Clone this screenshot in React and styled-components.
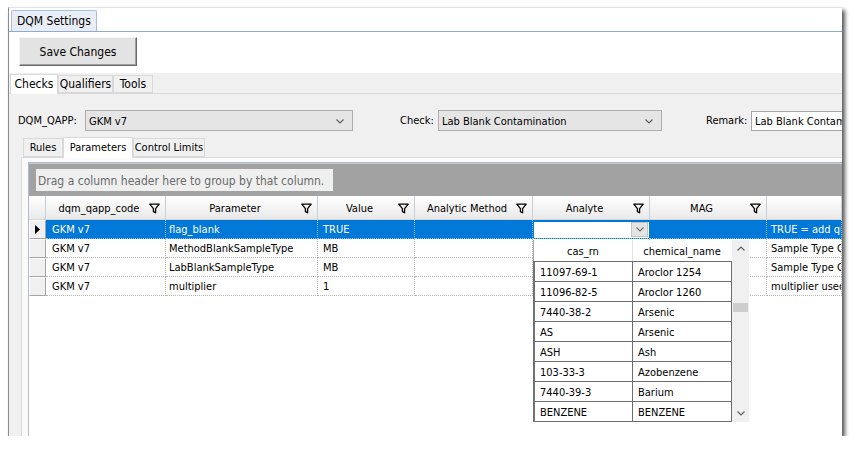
import React from 'react';
import styled, { createGlobalStyle } from 'styled-components';

const FONT = `"DejaVu Sans Condensed", "DejaVu Sans", Tahoma, sans-serif`;

const Global = createGlobalStyle`
  html, body { margin: 0; padding: 0; background: #fff; }
  body { font-family: ${FONT}; font-size: 11px; color: #000; }
  * { box-sizing: border-box; }
`;

const Window = styled.div`
  margin: 7px 0 0 8px;
  width: 834px;
  height: 429px;
  background: #fff;
  border-left: 1px solid #8c8c8c;
  border-top: 1px solid #e3e3e3;
  box-shadow: 3px 3px 4px rgba(0, 0, 0, 0.65);
  display: flex;
  flex-direction: column;
  overflow: hidden;
`;

const DocTabBar = styled.div`
  flex: none;
  display: flex;
  align-items: flex-end;
  height: 24px;
  padding-left: 2px;
  border-bottom: 1px solid #8ea9d3;
`;

const DocTab = styled.div`
  height: 21px;
  padding: 0 5px;
  display: flex;
  align-items: center;
  background: #e9eef6;
  border: 1px solid #a9bedf;
  border-bottom: none;
  border-radius: 2px 2px 0 0;
  font-size: 12px;
`;

const Toolbar = styled.div`
  flex: none;
  height: 41px;
  padding: 5px 0 0 10px;
`;

const Button = styled.button`
  width: 118px;
  height: 29px;
  font-family: ${FONT};
  font-size: 12px;
  color: #000;
  background: #e3e3e3;
  border: 1px solid;
  border-color: #f4f4f4 #6a6a6a #6a6a6a #f4f4f4;
  box-shadow: inset -1px -1px 0 #a0a0a0;
  padding: 0;
`;

const TabStrip = styled.div`
  flex: none;
  display: flex;
  align-items: flex-end;
  height: ${p => p.$h}px;
  padding-left: ${p => p.$pad}px;
  background: ${p => p.$bg};
`;

const Tab = styled.div`
  flex: none;
  width: ${p => p.$w}px;
  height: ${p => (p.$active ? p.$h + 2 : p.$h)}px;
  margin-bottom: ${p => (p.$active ? -1 : 0)}px;
  position: relative;
  z-index: ${p => (p.$active ? 1 : 0)};
  display: flex;
  align-items: center;
  justify-content: center;
  padding-bottom: ${p => (p.$active ? 2 : 0)}px;
  background: ${p => (p.$active ? '#ffffff' : '#f0f0f0')};
  border: 1px solid #d9d9d9;
  border-bottom: ${p => (p.$active ? 'none' : '1px solid #d9d9d9')};
  font-size: ${p => p.$fs}px;
  white-space: nowrap;
`;

const OuterPanel = styled.div`
  flex: 1;
  min-height: 0;
  display: flex;
  flex-direction: column;
  background: #f0f0f0;
  border-top: 1px solid #d9d9d9;
`;

const FilterRow = styled.div`
  flex: none;
  display: flex;
  align-items: center;
  height: 21px;
  margin-top: 16px;
  padding-left: 9px;
`;

const FieldLabel = styled.span`
  flex: none;
  width: ${p => p.$w}px;
  margin-left: ${p => p.$ml || 0}px;
  font-size: 11px;
  white-space: nowrap;
`;

const Combo = styled.div`
  flex: none;
  width: ${p => p.$w}px;
  height: 21px;
  display: flex;
  align-items: center;
  padding: 1px 8px 0 3px;
  background: #e5e5e5;
  border: 1px solid #adadad;
`;

const ComboText = styled.span`
  flex: 1;
  white-space: nowrap;
`;

const TextBox = styled.div`
  flex: 1;
  min-width: 0;
  height: 20px;
  display: flex;
  align-items: center;
  padding: 1px 0 0 3px;
  background: #fff;
  border: 1px solid #a6a6a6;
  border-right: none;
  white-space: nowrap;
  overflow: hidden;
`;

const InnerArea = styled.div`
  flex: 1;
  min-height: 0;
  display: flex;
  flex-direction: column;
  margin: 4px 0 0 12px;
`;

const InnerPanel = styled.div`
  flex: 1;
  min-height: 0;
  display: flex;
  background: #fafafa;
  border-top: 1px solid #d9d9d9;
  border-left: 1px solid #d9d9d9;
  padding: 4px 0 0 6px;
`;

const Grid = styled.div`
  flex: 1;
  min-width: 0;
  position: relative;
  display: flex;
  flex-direction: column;
  background: #fff;
  border-top: 1px solid #aabdd4;
  border-left: 1px solid #aabdd4;
  overflow: hidden;
`;

const GroupPanel = styled.div`
  flex: none;
  height: 33px;
  padding: 5px 0 0 7px;
  background: #a2a2a2;
  border-top: 1px solid #c8c8c8;
`;

const GroupHint = styled.div`
  display: inline-flex;
  align-items: center;
  height: 22px;
  width: 297px;
  padding: 1px 0 0 2px;
  background: #efefef;
  color: #6a6a6a;
  font-size: 12px;
  white-space: nowrap;
`;

const Row = styled.div`
  flex: none;
  display: flex;
  width: 100%;
  overflow: hidden;
  height: ${p => p.$h}px;
  background: ${p => (p.$selected ? '#0078d7' : '#fff')};
  color: ${p => (p.$selected ? '#fff' : '#000')};
`;

const HeadCell = styled.div`
  flex: ${p => (p.$fill ? '1 0 auto' : 'none')};
  width: ${p => p.$w}px;
  display: flex;
  align-items: center;
  padding: 1px 5px 0 3px;
  background: linear-gradient(#ffffff, #f3f3f3 55%, #e9e9e9);
  border-right: 1px solid #c6cfd8;
  border-bottom: 1px solid #d6d6d6;
  white-space: nowrap;
  overflow: hidden;
`;

const HeadLabel = styled.span`
  flex: 1;
  text-align: center;
  overflow: hidden;
`;

const Indicator = styled.div`
  flex: none;
  width: 17px;
  display: flex;
  align-items: center;
  justify-content: center;
  background: #f0f0f0;
  border-top: 1px solid #fdfdfd;
  border-left: 1px solid #fdfdfd;
  border-right: 1px solid #a5a5a5;
  border-bottom: 1px solid #a5a5a5;
`;

const Cell = styled.div`
  flex: ${p => (p.$fill ? '1 1 0' : 'none')};
  min-width: 0;
  width: ${p => p.$w}px;
  display: flex;
  align-items: center;
  padding: 1px 0 0 ${p => p.$pl}px;
  border-right: 1px dotted ${p => (p.$selected ? '#8fc0ea' : '#b4b4b4')};
  border-bottom: 1px dotted ${p => (p.$selected ? '#8fc0ea' : '#b4b4b4')};
  white-space: nowrap;
  overflow: hidden;
`;

const EditorCell = styled.div`
  flex: none;
  width: ${p => p.$w}px;
  padding: 2px 1px 0 1px;
  border-bottom: 1px dotted #8fc0ea;
  display: flex;
`;

const Editor = styled.div`
  flex: 1;
  display: flex;
  justify-content: flex-end;
  background: #fff;
  padding: 0 1px 1px 0;
`;

const DropButton = styled.div`
  width: 17px;
  display: flex;
  align-items: center;
  justify-content: center;
  background: #e3e3e3;
  border: 1px solid #c4c4c4;
`;

const Popup = styled.div`
  position: absolute;
  left: 504px;
  top: 77px;
  width: 216px;
  height: 182px;
  display: flex;
  background: #fff;
  z-index: 5;
`;

const PopupTable = styled.div`
  width: 199px;
  display: flex;
  flex-direction: column;
`;

const PopupHeadRow = styled.div`
  display: flex;
  height: 21px;
  border-left: 1px solid #a8a8a8;
`;

const PopupHead = styled.div`
  width: ${p => p.$w}px;
  display: flex;
  align-items: center;
  justify-content: center;
  padding-top: 1px;
  border-right: 1px solid ${p => p.$line};
`;

const PopupBody = styled.div`
  border-left: 2px solid #727272;
  border-top: 1px solid #6e6e6e;
`;

const PopupRow = styled.div`
  display: flex;
  height: 20px;
  border-bottom: 1px solid #6e6e6e;
`;

const PopupCell = styled.div`
  width: ${p => p.$w}px;
  display: flex;
  align-items: center;
  padding: 1px 0 0 5px;
  border-right: 1px solid #6e6e6e;
  white-space: nowrap;
`;

const Scrollbar = styled.div`
  width: 17px;
  display: flex;
  flex-direction: column;
  background: #f0f0f0;
`;

const ScrollArrow = styled.div`
  flex: none;
  height: 17px;
  display: flex;
  align-items: center;
  justify-content: center;
`;

const Track = styled.div`
  flex: 1;
  padding: 46px 1px 0 1px;
`;

const Thumb = styled.div`
  height: 9px;
  background: #cdcdcd;
`;

const Chevron = ({ up, color = '#606060', w = 8 }) => (
  <svg width={w} height={5} viewBox="0 0 8 5" style={{ display: 'block' }}>
    <polyline
      points={up ? '0.5,4.5 4,1 7.5,4.5' : '0.5,0.5 4,4 7.5,0.5'}
      fill="none"
      stroke={color}
      strokeWidth="1.2"
    />
  </svg>
);

const Funnel = () => (
  <svg width="11" height="11" viewBox="0 0 11 11" style={{ display: 'block', flex: 'none' }}>
    <path d="M0.8 1.2 H10.2 L6.6 5.6 V9.8 L4.4 8.6 V5.6 Z" fill="none" stroke="#000" strokeWidth="1.3" strokeLinejoin="round" />
  </svg>
);

const Pointer = () => (
  <svg width="5" height="9" viewBox="0 0 5 9" style={{ display: 'block' }}>
    <path d="M0 0 L5 4.5 L0 9 Z" fill="#000" />
  </svg>
);

const columns = [
  { key: 'code', title: 'dqm_qapp_code', w: 120, pl: 6 },
  { key: 'param', title: 'Parameter', w: 152, pl: 3 },
  { key: 'value', title: 'Value', w: 97, pl: 5 },
  { key: 'method', title: 'Analytic Method', w: 118, pl: 5 },
  { key: 'analyte', title: 'Analyte', w: 117, pl: 5 },
  { key: 'mag', title: 'MAG', w: 117, pl: 5 },
  { key: 'desc', title: '', w: 0, pl: 4, last: true },
];

const rows = [
  { code: 'GKM v7', param: 'flag_blank', value: 'TRUE', method: '', analyte: '', mag: '', desc: 'TRUE = add qualifier' },
  { code: 'GKM v7', param: 'MethodBlankSampleType', value: 'MB', method: '', analyte: '', mag: '', desc: 'Sample Type Code' },
  { code: 'GKM v7', param: 'LabBlankSampleType', value: 'MB', method: '', analyte: '', mag: '', desc: 'Sample Type Code' },
  { code: 'GKM v7', param: 'multiplier', value: '1', method: '', analyte: '', mag: '', desc: 'multiplier used' },
];

const chemicals = [
  ['11097-69-1', 'Aroclor 1254'],
  ['11096-82-5', 'Aroclor 1260'],
  ['7440-38-2', 'Arsenic'],
  ['AS', 'Arsenic'],
  ['ASH', 'Ash'],
  ['103-33-3', 'Azobenzene'],
  ['7440-39-3', 'Barium'],
  ['BENZENE', 'BENZENE'],
];

export default function App() {
  return (
    <>
      <Global />
      <Window>
        <DocTabBar>
          <DocTab>DQM Settings</DocTab>
        </DocTabBar>
        <Toolbar>
          <Button>Save Changes</Button>
        </Toolbar>
        <TabStrip $h={20} $pad={1} $bg="#f0f0f0">
          <Tab $w={48} $h={18} $fs={12} $active>Checks</Tab>
          <Tab $w={55} $h={18} $fs={12}>Qualifiers</Tab>
          <Tab $w={40} $h={18} $fs={12}>Tools</Tab>
        </TabStrip>
        <OuterPanel>
          <FilterRow>
            <FieldLabel $w={67}>DQM_QAPP:</FieldLabel>
            <Combo $w={268}>
              <ComboText>GKM v7</ComboText>
              <Chevron />
            </Combo>
            <FieldLabel $w={38} $ml={47}>Check:</FieldLabel>
            <Combo $w={224}>
              <ComboText>Lab Blank Contamination</ComboText>
              <Chevron />
            </Combo>
            <FieldLabel $w={45} $ml={44}>Remark:</FieldLabel>
            <TextBox>Lab Blank Contami</TextBox>
          </FilterRow>
          <InnerArea>
            <TabStrip $h={22} $pad={2} $bg="transparent">
              <Tab $w={40} $h={19} $fs={11}>Rules</Tab>
              <Tab $w={70} $h={19} $fs={11} $active>Parameters</Tab>
              <Tab $w={72} $h={19} $fs={11}>Control Limits</Tab>
            </TabStrip>
            <InnerPanel>
              <Grid>
                <GroupPanel>
                  <GroupHint>Drag a column header here to group by that column.</GroupHint>
                </GroupPanel>
                <Row $h={24}>
                  <HeadCell $w={17} />
                  {columns.map(c => (
                    <HeadCell key={c.key} $w={c.w} $fill={c.last}>
                      <HeadLabel>{c.title}</HeadLabel>
                      {!c.last && <Funnel />}
                    </HeadCell>
                  ))}
                </Row>
                {rows.map((r, i) => {
                  const sel = i === 0;
                  return (
                    <Row key={i} $h={19} $selected={sel}>
                      <Indicator>{sel && <Pointer />}</Indicator>
                      {columns.map(c =>
                        sel && c.key === 'analyte' ? (
                          <EditorCell key={c.key} $w={c.w}>
                            <Editor>
                              <DropButton>
                                <Chevron color="#707070" />
                              </DropButton>
                            </Editor>
                          </EditorCell>
                        ) : (
                          <Cell key={c.key} $w={c.w} $pl={c.pl} $fill={c.last} $selected={sel}>
                            {r[c.key]}
                          </Cell>
                        )
                      )}
                    </Row>
                  );
                })}
                <Popup>
                  <PopupTable>
                    <PopupHeadRow>
                      <PopupHead $w={99} $line="#e2e2e2">cas_rn</PopupHead>
                      <PopupHead $w={99} $line="#ffffff">chemical_name</PopupHead>
                    </PopupHeadRow>
                    <PopupBody>
                      {chemicals.map(([cas, name]) => (
                        <PopupRow key={cas}>
                          <PopupCell $w={98}>{cas}</PopupCell>
                          <PopupCell $w={99}>{name}</PopupCell>
                        </PopupRow>
                      ))}
                    </PopupBody>
                  </PopupTable>
                  <Scrollbar>
                    <ScrollArrow>
                      <Chevron up color="#606060" />
                    </ScrollArrow>
                    <Track>
                      <Thumb />
                    </Track>
                    <ScrollArrow>
                      <Chevron color="#606060" />
                    </ScrollArrow>
                  </Scrollbar>
                </Popup>
              </Grid>
            </InnerPanel>
          </InnerArea>
        </OuterPanel>
      </Window>
    </>
  );
}
